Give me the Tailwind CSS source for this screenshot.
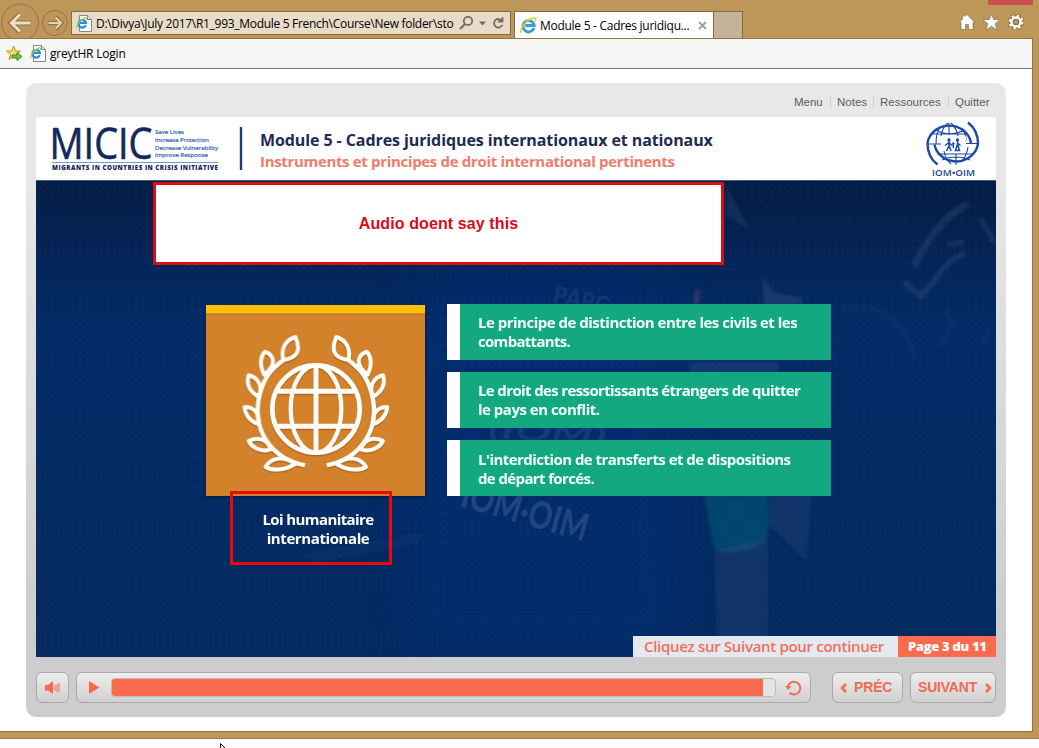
<!DOCTYPE html>
<html lang="fr">
<head>
<meta charset="utf-8">
<title>Module 5 - Cadres juridiques</title>
<script src="https://cdn.jsdelivr.net/npm/@tailwindcss/browser@4"></script>
</head>
<body class="w-[1039px] h-[748px] overflow-hidden bg-white font-['Open_Sans',sans-serif]">
<svg class="hidden">
  <symbol id="ie" viewBox="0 0 16 16">
    <path d="M13.2 10.4A5.3 5.3 0 1 1 13.4 8H5" fill="none" stroke="#2f9fe0" stroke-width="2.7"/>
    <path d="M1.2 14.8C-.8 12 5.5 3 11.5 1.2c3-.9 3.8.6 2.7 3" fill="none" stroke="#f2c61f" stroke-width="1.5"/>
  </symbol>
  <symbol id="iepage" viewBox="0 0 16 17">
    <path d="M3.5.5h8l4 4v12h-12z" fill="#fff" stroke="#83888c"/>
    <path d="M11.5.5v4h4" fill="#ddd" stroke="#83888c"/>
    <path d="M9.8 10.2A3.8 3.8 0 1 1 10 8H4" fill="none" stroke="#258be0" stroke-width="2.1"/>
    <path d="M1 13.3C0 11 4 4.5 8.6 3c2-.5 2.5.5 2 2" fill="none" stroke="#a9c43b" stroke-width="1.2"/>
  </symbol>
</svg>
<div class="flex w-[1039px] h-[739px] flex-col bg-[#bd965a] border-b border-[#a07d55]">
  <!-- browser toolbar -->
  <div class="flex h-[38px] w-full shrink-0 items-start">
    <svg class="w-[71px] h-[38px] shrink-0" viewBox="0 0 71 38" fill="none">
      <circle cx="20" cy="22.5" r="18.5" fill="#bc945c" stroke="#95733f"/>
      <circle cx="54.8" cy="23" r="12.5" fill="#bc945c" stroke="#95733f"/>
      <path d="M31 23H12M20 14l-9 9 9 9" stroke="#94713d" stroke-width="5"/>
      <path d="M30.500 23H12M20 14.500l-8.500 8.500 8.500 8.500" stroke="#ecdfc8" stroke-width="3"/>
      <path d="M48 23h13M55.500 17l6 6-6 6" stroke="#94713d" stroke-width="4"/>
      <path d="M48.500 23H61M55.500 17.500l5.500 5.500-5.500 5.500" stroke="#e3d2b3" stroke-width="2.200"/>
    </svg>
    <div class="mt-[11px] flex h-[24px] w-[440px] shrink-0 items-center border border-[#8a6a3c] bg-[#e8dcc8] pl-[4px]">
      <svg class="h-[17px] w-[16px] shrink-0"><use href="#iepage"/></svg>
      <span class="ml-[4px] mt-[2px] w-[360px] whitespace-nowrap text-[12px] leading-none tracking-[-0.3px] text-black">D:\Divya\July 2017\R1_993_Module 5 French\Course\New folder\sto</span>
      <svg class="ml-[3px] h-[16px] w-[48px] shrink-0" viewBox="0 0 48 16" fill="none" stroke="#756a5b" stroke-width="1.800">
        <circle cx="9" cy="6" r="4.200"/><path d="M6 9l-5 5" stroke-width="2.200"/>
        <path d="M20 6.500h7l-3.500 4z" fill="#756a5b" stroke="none"/>
        <path d="M43 6A4.300 4.300 0 1 0 43.300 10M43.500 2v4.500H39"/>
      </svg>
    </div>
    <div class="ml-[3px] mt-[11px] flex h-[27px] w-[200px] shrink-0 items-center border border-b-0 border-[#8a6a3c] bg-white pl-[5px]">
      <svg class="h-[17px] w-[17px] shrink-0"><use href="#ie"/></svg>
      <span class="ml-[3px] mt-[2px] w-[151px] whitespace-nowrap text-[12px] leading-none tracking-[-0.28px] text-black">Module 5 - Cadres juridiqu...</span>
      <svg class="ml-[7px] h-[9px] w-[9px] shrink-0" viewBox="0 0 9 9"><path d="M1 1l7 7M8 1L1 8" stroke="#a2a2a2" stroke-width="2"/></svg>
    </div>
    <div class="mt-[11px] h-[27px] w-[29px] shrink-0 border border-b-0 border-l-0 border-[#8a6a3c] bg-[#c3b299]"></div>
    <div class="ml-[217px] flex w-[66px] flex-col">
      <div class="ml-[28px] h-[5px] w-[45px] bg-[#c9504e]"></div>
      <svg class="mt-[9px] h-[18px] w-[66px]" viewBox="0 0 66 18" fill="#fff" stroke="#80643a" stroke-width=".6">
        <path d="M7 .500L14.800 8.500H13V15.500H8.500V10.500H5.500V15.500H1V8.500H-.800L2.500 5.300V1.200h2.500v1.300z"/>
        <path d="M31.500 -.300l2.200 6h6.600l-5.200 4 2 6.500-5.600-4-5.600 4 2-6.500-5.200-4h6.600z"/>
        <g fill="none"><circle cx="56" cy="8" r="4.500" stroke-width="4.400"/><circle cx="56" cy="8" r="6.400" stroke="#80643a" stroke-width="3.400" stroke-dasharray="3 2.030"/><circle cx="56" cy="8" r="4.500" stroke="#fff" stroke-width="2.500"/><circle cx="56" cy="8" r="6.300" stroke="#fff" stroke-width="2.200" stroke-dasharray="2.400 2.548"/></g>
      </svg>
    </div>
  </div>
  <!-- page area -->
  <div class="flex h-[694px] w-[1033px] shrink-0 flex-col border-y border-r border-[#93733f] bg-white">
    <div class="flex h-[30px] shrink-0 items-center border-b border-[#777] bg-[#f6f6f6] pl-[6px]">
      <svg class="h-[17px] w-[17px]" viewBox="0 0 17 17">
        <path d="M7.500 1l2 5h5l-4 3.500 1.500 5-4.500-3L3 14.500l1.500-5L.7 6h5z" fill="#fbdc69" stroke="#c98a20"/>
        <path d="M6 10h5V7.500l5 4-5 4V13H6z" fill="#66c447" stroke="#3c8c2a"/>
      </svg>
      <svg class="ml-[7px] h-[17px] w-[16px]"><use href="#iepage"/></svg>
      <span class="ml-[4px] text-[12px] leading-none tracking-[-0.2px] text-black">greytHR Login</span>
    </div>
    <!-- course player -->
    <div class="ml-[26px] mt-[14px] flex h-[634px] w-[980px] flex-col rounded-[10px] bg-linear-to-b from-[#e8e8e8] from-15% to-[#cdcdcd] to-85% px-[10px]">
      <div class="flex h-[34px] shrink-0 items-center justify-end pr-[6px] pt-[4px] font-['Liberation_Sans',sans-serif] text-[11.500px] leading-[12px] text-[#5c5c5c]">
        <span class="w-[30px] whitespace-nowrap">Menu</span>
        <span class="ml-[6px] w-[37px] whitespace-nowrap border-l border-[#d2d2d2] pl-[6px]">Notes</span>
        <span class="ml-[6px] w-[69px] whitespace-nowrap border-l border-[#d2d2d2] pl-[6px]">Ressources</span>
        <span class="ml-[6px] w-[42px] whitespace-nowrap border-l border-[#d2d2d2] pl-[6px]">Quitter</span>
      </div>
      <div class="relative flex h-[540px] w-[960px] shrink-0 flex-col">
        <div class="flex h-[64px] shrink-0 border-b border-[#3f5c82] bg-white">
          <svg class="h-[63px] w-[210px] shrink-0" viewBox="36 117 210 63" font-family="'Open Sans',sans-serif">
            <text x="49.500" y="158.500" font-size="43" textLength="103" lengthAdjust="spacingAndGlyphs" fill="#12295c" stroke="#12295c" stroke-width=".6">MICIC</text>
            <g font-size="6" fill="#2c61b4" stroke="#2c61b4" stroke-width=".2">
              <text x="155" y="133.500" textLength="29" lengthAdjust="spacingAndGlyphs">Save Lives</text>
              <text x="155" y="141.500" textLength="54" lengthAdjust="spacingAndGlyphs">Increase Protection</text>
              <text x="155" y="149.500" textLength="63" lengthAdjust="spacingAndGlyphs">Decrease Vulnerability</text>
              <text x="155" y="157" textLength="53" lengthAdjust="spacingAndGlyphs">Improve Response</text>
            </g>
            <path d="M52 162.500h166" stroke="#7798c7"/>
            <text x="52" y="169.500" font-size="6.200" font-weight="800" textLength="166" lengthAdjust="spacing" fill="#10234f">MIGRANTS IN COUNTRIES IN CRISIS INITIATIVE</text>
            <path d="M241 127v43" stroke="#263c75" stroke-width="2.400"/>
          </svg>
          <div class="ml-[14px] mt-[12px] flex w-[620px] flex-col whitespace-nowrap font-bold">
            <span class="text-[16px] leading-[22px] tracking-[-0.09px] text-[#1e2b54]">Module 5 - Cadres juridiques internationaux et nationaux</span>
            <span class="text-[15px] leading-[21px] tracking-[-0.33px] text-[#ee7d69]">Instruments et principes de droit international pertinents</span>
          </div>
          <svg class="ml-[42px] h-[63px] w-[60px] shrink-0" viewBox="922 117 60 63" fill="none" stroke="#1c4aa5">
            <path d="M937.500 164.500C930 159 927.500 151 927.500 143A22 20.500 0 0 1 971 143" stroke-width="2.400"/>
            <path d="M968 122.500C975 128 978 136 978 143.500A22 20.500 0 0 1 934.500 144.500" stroke-width="2.400"/>
            <path d="M932 134h36M937 154h36M928 144h14M965 143.500h13M949 123v12M956 154v11M939 129c-3 5-3 9-3 15M962 128c3 4 4 8 4 13M936 130c8 5 20 5 28 0M942 160c8-4 20-4 28 0M944 151c1 5 3 10 7 13M968 147c-1 7-4 12-7 15M941 136c1-6 3-10 7-13M958 136c-1-6-4-10-7-13" stroke-width="1.100"/>
            <path d="M941 136.500h25v14.500h-25z" fill="#fff" stroke="none"/>
            <g fill="#1c4aa5" stroke="none"><circle cx="949" cy="140" r="1.700"/><circle cx="957.500" cy="140" r="1.700"/><circle cx="953.300" cy="143.500" r="1.200"/></g>
            <path d="M949 141v5l-2.500 5M949 145l2 6M949 142.500l-4 3M949 142.500l3 3M957.500 141v5M955.500 150.500l1.500-5h1l1.500 5zM953.300 144v4M957 142.500l3.500 3" stroke-width="1.500"/>
            <text x="932" y="176" font-family="'Open Sans',sans-serif" font-size="8" font-weight="600" fill="#1c438f" stroke="none" textLength="43" lengthAdjust="spacingAndGlyphs">IOM•OIM</text>
          </svg>
        </div>
        <div class="relative flex h-[476px] flex-col overflow-hidden bg-linear-to-b from-[#031d46] via-[#042b66] via-30% to-[#042a60]">
          <!-- faded backdrop -->
          <svg class="absolute inset-0 h-[476px] w-[960px]" viewBox="36 181 960 476">
            <defs>
              <filter id="soft"><feGaussianBlur stdDeviation="1.500"/></filter>
              <filter id="wide"><feGaussianBlur stdDeviation="22"/></filter>
              <pattern id="dots" width="7" height="7" patternUnits="userSpaceOnUse"><circle cx="3" cy="3" r="1.300" fill="#5f7ba6" opacity=".06"/></pattern>
            </defs>
            <path d="M420 280h250l20 377H400z" fill="#012f7c" opacity=".4" filter="url(#wide)"/>
            <rect x="36" y="181" width="960" height="476" fill="url(#dots)"/>
            <g filter="url(#soft)" fill="#5a7195">
              <path d="M704 495h64v42c-8 14-42 18-54 12z" fill="#087080" opacity=".38"/>
              <path d="M714 551l54-12v118h-50z" opacity=".14"/>
              <path d="M770 495h42l-6 66-26-26-12-10z" opacity=".15"/>
              <path d="M726 185l24 45-24-14z" opacity=".16"/>
              <path d="M762 277l12 15 28 6v8h-38z" opacity=".22"/>
              <path d="M695 290l6 0-2 14h-6z" fill="#855c78" opacity=".3"/>
              <path d="M690 362h88v10h-88z" opacity=".2"/>
              <path d="M425 532l-8 12-100 18-20-8z" opacity=".08"/>
            </g>
            <g fill="none" stroke="#6f82a2" opacity=".17" filter="url(#soft)">
              <path d="M968 204c-25 12-42 37-54 63" stroke-width="7"/>
              <path d="M965 253c-22 8-28 28-44 43l-17-14" stroke-width="6"/>
              <path d="M980 218l15 25M948 245l16-3" stroke-width="5"/>
            </g>
            <g fill="none" stroke="#6f82a2" opacity=".08" filter="url(#soft)">
              <path d="M840 308c35-5 60 5 75 50M945 310l8 16-12 20M990 330l-8 15" stroke-width="3"/>
            </g>
            <g font-family="Lato,sans-serif" fill="#a1abba">
              <text x="459" y="506" transform="rotate(16 459 506)" font-size="38" font-weight="900" textLength="130" lengthAdjust="spacingAndGlyphs" opacity=".2">IOM·OIM</text>
              <text x="488" y="438" font-size="26" font-style="italic" font-weight="700" transform="rotate(3 488 438)" textLength="118" lengthAdjust="spacingAndGlyphs" opacity=".12">(IOM)</text>
              <text x="552" y="302" transform="rotate(12 552 302)" font-size="22" font-weight="900" opacity=".1">PARC</text>
            </g>
          </svg>
          <div class="relative ml-[170px] mt-[123px] flex gap-[22px]">
            <div class="mt-[1px] flex w-[219px] flex-col items-center">
              <svg class="h-[191px] w-[219px] shrink-0 shadow-[0_1px_3px_#06183a]" viewBox="33 31 657 573">
                <defs>
                  <g id="branch">
                    <path d="M330 512C225 492 166 400 196 293 211 240 235 219 265 196" stroke-width="13"/>
                    <path d="M265 196C256 160 273 136 301 127 320 170 305 190 265 196z"/>
                    <path d="M207 240C190 204 200 180 210 171 240 183 245 212 207 240z"/>
                    <path d="M190 306C157 286 155 262 161 242 191 248 205 280 190 306z"/>
                    <path d="M190 388C158 378 148 350 149 337 180 337 195 360 190 388z"/>
                    <path d="M227 464C194 475 169 455 161 439 190 425 218 434 227 464z"/>
                    <path d="M300 508C267 529 229 528 212 517 226 490 267 480 300 508z"/>
                  </g>
                  <g id="emblem" fill="none" stroke-width="12" stroke-linejoin="round">
                    <use href="#branch"/><use href="#branch" transform="translate(725 0) scale(-1 1)"/>
                    <circle cx="363" cy="343" r="131" stroke-width="14"/>
                    <path d="M363 212v262M247 290h232M247 395h232" stroke-width="15"/>
                    <ellipse cx="363" cy="343" rx="76" ry="131" stroke-width="13"/>
                  </g>
                </defs>
                <rect x="33" y="31" width="657" height="573" fill="#d3812b"/>
                <rect x="33" y="56" width="657" height="4" fill="#b4722d"/>
                <rect x="33" y="31" width="657" height="25" fill="#fdc005"/>
                <use href="#emblem" stroke="#955716" opacity=".6" y="4"/>
                <use href="#emblem" stroke="#fffdf8"/>
              </svg>
              <p class="mt-[14px] pl-[5px] text-center text-[15px] leading-[19px] font-bold tracking-[-0.6px] text-white">Loi humanitaire<br><span class="tracking-[-0.4px]">internationale</span></p>
            </div>
            <div class="flex w-[384px] flex-col gap-[12px] whitespace-nowrap text-[15px] leading-[19px] font-bold text-[#f1fff9]">
              <p class="flex h-[56px] items-center border-l-[13px] border-white bg-[#14a881] pl-[18px]"><span class="tracking-[-0.5px]">Le principe de distinction entre les civils et les<br><span class="tracking-[-0.7px]">combattants.</span></span></p>
              <p class="flex h-[56px] items-center border-l-[13px] border-white bg-[#14a881] pl-[18px]"><span class="tracking-[-0.63px]">Le droit des ressortissants étrangers de quitter<br><span class="tracking-[-0.5px]">le pays en conflit.</span></span></p>
              <p class="flex h-[56px] items-center border-l-[13px] border-white bg-[#14a881] pl-[18px] pt-[2px]"><span class="tracking-[-0.54px]">L'interdiction de transferts et de dispositions<br><span class="tracking-[-0.62px]">de départ forcés.</span></span></p>
            </div>
          </div>
          <div class="relative mt-auto flex h-[21px] justify-end whitespace-nowrap leading-[21px]">
            <span class="w-[265px] bg-[#e5e8ef] pl-[11px] text-[15px] font-semibold tracking-[-0.31px] text-[#ed705b]">Cliquez sur Suivant pour continuer</span>
            <span class="w-[98px] bg-[#fc6b4d] pl-[10px] text-[13px] font-extrabold tracking-[-0.3px] text-white">Page 3 du 11</span>
          </div>
        </div>
        <!-- review annotations -->
        <div class="absolute left-[117px] top-[65px] flex h-[83px] w-[571px] items-center justify-center border-[3px] border-[#dc0b14] bg-white font-['Liberation_Sans',sans-serif] text-[16px] font-bold tracking-[0.1px] text-[#d90b18]"><span class="whitespace-nowrap">Audio doent say this</span></div>
        <div class="absolute left-[194px] top-[374px] h-[74px] w-[162px] border-[3px] border-[#e90b0c]"></div>
      </div>
      <!-- playback controls -->
      <div class="mt-[15px] flex h-[31px] shrink-0 font-['Liberation_Sans',sans-serif] text-[14px] font-bold text-[#ef6b52]">
        <div class="flex w-[33px] items-center justify-center rounded-[6px] border border-[#aaa] bg-linear-to-b from-[#eee] to-[#cfcfcf]">
          <svg class="h-[14px] w-[16px]" viewBox="0 0 16 14"><path d="M0 4h3l5-4v13L3 9.500H0z" fill="#fa694c"/><path d="M10 4v6M12 3v8M14 2v9.500" stroke="#fa694c"/></svg>
        </div>
        <div class="ml-[7px] flex w-[735px] items-center rounded-[6px] border border-[#aaa] bg-linear-to-b from-[#eee] to-[#cfcfcf] pl-[11px]">
          <svg class="h-[13px] w-[12px]" viewBox="0 0 12 13"><path d="M1 0l10.500 6.500L1 13z" fill="#fa694c"/></svg>
          <div class="ml-[11px] flex h-[19px] w-[665px] overflow-hidden rounded-[4px] border border-[#bbb] bg-[#e3e3e3]"><div class="w-[651px] bg-[#fb6a4c]"></div></div>
          <svg class="ml-[9px] h-[16px] w-[17px]" viewBox="0 0 17 16"><path d="M2.700 6.500A6.400 6.400 0 1 1 4.500 12.800" fill="none" stroke="#ef6b50" stroke-width="1.900"/><path d="M0 6h6.500L3 10z" fill="#ef6b50"/></svg>
        </div>
        <div class="ml-[21px] flex w-[71px] items-center rounded-[6px] border border-[#aaa] bg-linear-to-b from-[#eee] to-[#cfcfcf] pl-[7px]">
          <svg class="mt-[1px] h-[10px] w-[7px]" viewBox="0 0 7 10"><path d="M6 1L2 5l4 4" fill="none" stroke="#ef6b52" stroke-width="2.600"/></svg>
          <span class="ml-[7px] tracking-[-0.15px]">PRÉC</span>
        </div>
        <div class="ml-[7px] flex w-[86px] items-center rounded-[6px] border border-[#aaa] bg-linear-to-b from-[#eee] to-[#cfcfcf] pl-[7px]">
          <span class="w-[60px] tracking-[-0.2px]">SUIVANT</span>
          <svg class="ml-[7px] mt-[1px] h-[10px] w-[7px]" viewBox="0 0 7 10"><path d="M1 1l4 4-4 4" fill="none" stroke="#ef6b52" stroke-width="2.600"/></svg>
        </div>
      </div>
    </div>
  </div>
</div>
<svg class="ml-[220px] mt-[4px] h-[5px] w-[7px]" viewBox="0 0 7 5"><path d="M.5 7V.5l6 6" fill="#fff" stroke="#111"/></svg>
</body>
</html>
